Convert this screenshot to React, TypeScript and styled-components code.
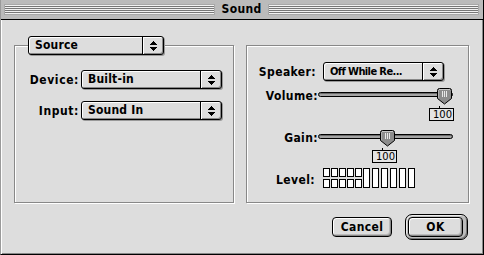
import React from "react";
import styled, { createGlobalStyle } from "styled-components";

const GlobalStyle = createGlobalStyle`
  html, body {
    margin: 0;
    padding: 0;
    background: #dddddd;
  }
  body {
    font-family: "DejaVu Sans Condensed", "DejaVu Sans", sans-serif;
    font-stretch: condensed;
    font-size: 12px;
    color: #000;
  }
`;

const Window = styled.div`
  width: 484px;
  height: 255px;
  box-sizing: border-box;
  display: flex;
  flex-direction: column;
  background: #dddddd;
  border-left: 1px solid #9a9a9a;
  border-right: 1px solid #000;
  border-bottom: 1px solid #000;
`;

const TitleBar = styled.div`
  height: 20px;
  flex: none;
  box-sizing: border-box;
  display: flex;
  align-items: center;
  padding: 0 4px 0 3px;
  background: #bbbbbb;
  border-bottom: 1px solid #000;
`;

const Stripes = styled.div`
  flex: 1;
  height: 11px;
  background: repeating-linear-gradient(
    to bottom,
    #777777 0 1px,
    #f2f2f2 1px 2px
  );
  box-shadow: inset 0 0 0 1px #a8a8a8;
`;

const Title = styled.div`
  padding: 0 7px;
  font-weight: bold;
  font-size: 12px;
  line-height: 19px;
  letter-spacing: 0.3px;
`;

const Body = styled.div`
  flex: 1;
  display: flex;
  flex-direction: column;
  padding: 25px 13px 0 13px;
  box-shadow: inset 1px 0 0 #fff, inset -1px -1px 0 #888;
`;

const Panels = styled.div`
  display: flex;
  gap: 12px;
`;

const GroupBox = styled.div<{ $w: number }>`
  width: ${(p) => p.$w}px;
  height: 158px;
  box-sizing: border-box;
  border: 1px solid #888;
  box-shadow: inset 1px 1px 0 #fff, 1px 1px 0 #fff;
  display: flex;
  flex-direction: column;
`;

/* popup menu button */
const PopupBox = styled.div<{ $w: number }>`
  width: ${(p) => p.$w}px;
  height: 19px;
  box-sizing: border-box;
  display: flex;
  border: 1px solid #000;
  border-radius: 3px;
  background: #dddddd;
  box-shadow: inset 1px 1px 0 #fff, inset -1px -1px 0 #888, 1px 1px 0 #999;
  font-weight: bold;
  overflow: hidden;
`;

const PopupText = styled.div<{ $tight?: boolean }>`
  flex: 1;
  padding-left: 6px;
  line-height: 17px;
  white-space: nowrap;
  overflow: hidden;
  font-size: ${(p) => (p.$tight ? "11px" : "12px")};
  letter-spacing: ${(p) => (p.$tight ? "-0.6px" : "0.2px")};
`;

const PopupArrow = styled.div`
  width: 20px;
  display: flex;
  align-items: center;
  justify-content: center;
  border-left: 1px solid #000;
  box-shadow: inset 1px 0 0 #fff;
`;

const Arrows = () => (
  <svg width="7" height="10" viewBox="0 0 7 10" shapeRendering="crispEdges">
    <path d="M3 0h1v1h1v1h1v1h1v1H0V3h1V2h1V1h1z" fill="#000" />
    <path d="M0 6h7v1H6v1H5v1H4v1H3V9H2V8H1V7H0z" fill="#000" />
  </svg>
);

const Popup = ({ w, text, tight }: { w: number; text: string; tight?: boolean }) => (
  <PopupBox $w={w}>
    <PopupText $tight={tight}>{text}</PopupText>
    <PopupArrow>
      <Arrows />
    </PopupArrow>
  </PopupBox>
);

const SourceSlot = styled.div`
  margin: -10px 0 0 13px;
`;

const FieldGrid = styled.div`
  display: grid;
  grid-template-columns: 64px 141px;
  column-gap: 2px;
  row-gap: 12px;
  margin-top: 15px;
  align-items: center;
`;

const FieldLabel = styled.div`
  text-align: right;
  font-weight: bold;
  white-space: nowrap;
  letter-spacing: 0.6px;
`;

const RightColumn = styled.div`
  display: flex;
  flex-direction: column;
  padding-top: 16px;
`;

const Row = styled.div<{ $top?: number }>`
  display: flex;
  align-items: center;
  margin-top: ${(p) => p.$top ?? 0}px;
`;

const RowLabel = styled.div<{ $pad?: number; $drop?: number }>`
  width: 71px;
  box-sizing: border-box;
  padding-right: ${(p) => p.$pad ?? 0}px;
  padding-top: ${(p) => p.$drop ?? 0}px;
  text-align: right;
  font-weight: bold;
  white-space: nowrap;
  letter-spacing: 0.4px;
`;

const Spacer = styled.div<{ $w?: number; $h?: number }>`
  width: ${(p) => p.$w ?? 0}px;
  height: ${(p) => p.$h ?? 0}px;
  flex: none;
`;

const SliderArea = styled.div`
  position: relative;
  width: 135px;
  height: 16px;
`;

const Track = styled.div`
  margin-top: 4px;
  height: 5px;
  box-sizing: border-box;
  border: 1px solid #000;
  border-radius: 3px;
  background: #a4a4a4;
  box-shadow: inset 0 1px 0 #6a6a6a;
`;

const Thumb = styled.svg`
  position: absolute;
  top: 0;
`;

const ValueRow = styled.div<{ $top: number }>`
  display: flex;
  margin-top: ${(p) => p.$top}px;
  padding-left: 71px;
`;

const ValueBox = styled.div`
  position: relative;
  width: 25px;
  height: 13px;
  box-sizing: border-box;
  border: 1px solid #000;
  background: #e4e4e4;
  font-family: "DejaVu Sans", sans-serif;
  font-stretch: normal;
  font-size: 10px;
  line-height: 11px;
  text-align: right;
  padding-right: 1px;
  &::before {
    content: "";
    position: absolute;
    top: -3px;
    left: 9px;
    width: 1px;
    height: 2px;
    background: #000;
  }
`;

const Slider = ({ label, pos }: { label: string; pos: number }) => {
  const left = Math.round(pos * 120);
  return (
    <>
      <Row>
        <RowLabel>{label}</RowLabel>
        <SliderArea>
          <Track />
          <Thumb width="15" height="17" viewBox="0 0 15 17" style={{ left }}>
            <path
              d="M0.5 2.5 Q0.5 0.5 2.5 0.5 H12.5 Q14.5 0.5 14.5 2.5 V10.5 L7.5 16 L0.5 10.5 Z"
              fill="#8c8c8c"
              stroke="#000"
            />
            <path d="M2 1.5 H13" stroke="#c8c8c8" />
            <path d="M1.5 2 V10" stroke="#b0b0b0" />
            <path d="M5.5 3 V9 M7.5 3 V9 M9.5 3 V9" stroke="#e8e8e8" />
          </Thumb>
        </SliderArea>
      </Row>
      <ValueRow $top={4}>
        <Spacer $w={left - 8} />
        <ValueBox>100</ValueBox>
      </ValueRow>
    </>
  );
};

const Meter = styled.div`
  display: flex;
  align-items: flex-start;
`;

const SquareCol = styled.div`
  display: flex;
  flex-direction: column;
  gap: 2px;
  margin-right: 1px;
`;

const Cell = styled.div<{ $tall?: boolean }>`
  width: 7px;
  height: ${(p) => (p.$tall ? 20 : 9)}px;
  box-sizing: border-box;
  border: 1px solid #000;
  background: #fff;
  margin-right: ${(p) => (p.$tall ? 2 : 0)}px;
`;

const ButtonRow = styled.div`
  display: flex;
  justify-content: flex-end;
  align-items: center;
  gap: 13px;
  margin-top: 11px;
  padding-right: 2px;
`;

const Button = styled.div<{ $w: number; $fill?: boolean }>`
  width: ${(p) => p.$w}px;
  height: ${(p) => (p.$fill ? "100%" : "20px")};
  box-sizing: border-box;
  border: 1px solid #000;
  border-radius: 4px;
  background: #dddddd;
  box-shadow: inset 1px 1px 0 #fff, inset -1px -1px 0 #888, inset -2px -2px 0 #bbb;
  display: flex;
  align-items: center;
  justify-content: center;
  font-weight: bold;
  letter-spacing: 0.4px;
`;

const DefaultRing = styled.div`
  width: 63px;
  height: 26px;
  box-sizing: border-box;
  border: 1px solid #000;
  border-radius: 7px;
  padding: 2px;
  background: #bdbdbd;
  box-shadow: inset 1px 1px 0 #eee, inset -1px -1px 0 #777;
  display: flex;
`;

export default function App() {
  return (
    <>
      <GlobalStyle />
      <Window>
        <TitleBar>
          <Stripes />
          <Title>Sound</Title>
          <Stripes />
        </TitleBar>
        <Body>
          <Panels>
            <GroupBox $w={220}>
              <SourceSlot>
                <Popup w={136} text="Source" />
              </SourceSlot>
              <FieldGrid>
                <FieldLabel>Device:</FieldLabel>
                <Popup w={141} text="Built-in" />
                <FieldLabel>Input:</FieldLabel>
                <Popup w={141} text="Sound In" />
              </FieldGrid>
            </GroupBox>
            <GroupBox $w={223}>
              <RightColumn>
                <Row>
                  <RowLabel $pad={2}>Speaker:</RowLabel>
                  <Spacer $w={5} />
                  <Popup w={121} text="Off While Re..." tight />
                </Row>
                <Spacer $h={7} />
                <Slider label="Volume:" pos={0.99} />
                <Spacer $h={9} />
                <Slider label="Gain:" pos={0.52} />
                <Row $top={5}>
                  <RowLabel $pad={3} $drop={4}>Level:</RowLabel>
                  <Spacer $w={5} />
                  <Meter>
                    {[0, 1, 2, 3, 4].map((i) => (
                      <SquareCol key={i}>
                        <Cell />
                        <Cell />
                      </SquareCol>
                    ))}
                    {[0, 1, 2, 3, 4, 5].map((i) => (
                      <Cell key={i} $tall />
                    ))}
                  </Meter>
                </Row>
              </RightColumn>
            </GroupBox>
          </Panels>
          <ButtonRow>
            <Button $w={60}>Cancel</Button>
            <DefaultRing>
              <Button $w={55} $fill>
                OK
              </Button>
            </DefaultRing>
          </ButtonRow>
        </Body>
      </Window>
    </>
  );
}
